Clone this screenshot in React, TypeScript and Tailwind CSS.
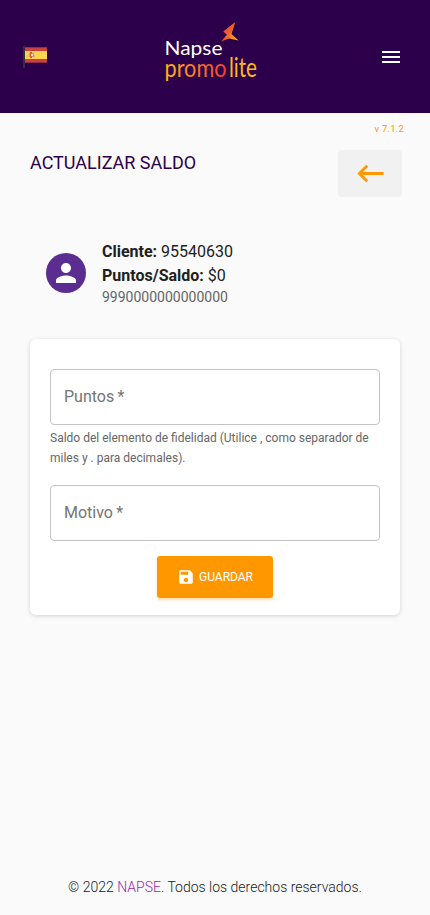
import { MdKeyboardBackspace, MdMenu, MdPerson, MdSave } from 'react-icons/md';

export default function App() {
  return (
    <div className="flex h-[915px] flex-col bg-[#fafafa] font-[Roboto,sans-serif] text-[#212121]">
      <Header />

      <main className="flex flex-1 flex-col px-[30px]">
        <p className="-mr-1 mt-[9px] text-right text-[9.5px] leading-[14px] tracking-[0.2px] text-[#ff9800]">v 7.1.2</p>

        <div className="mt-[14px] flex items-start justify-between">
          <h1 className="text-[18px] leading-[26px] text-[#2d004b]">ACTUALIZAR SALDO</h1>
          <button className="-mr-[2px] flex h-[47px] w-16 items-center justify-center rounded bg-[#f1f1f1] text-[#ff9800]">
            <MdKeyboardBackspace size={35} />
          </button>
        </div>

        <ClientInfo client="95540630" balance="$0" card="9990000000000000" />

        <form className="mt-[33px] flex h-[276px] flex-col rounded-md bg-white px-5 pt-[30px] shadow-[0_1px_4px_rgba(0,0,0,0.16)]">
          <Field label="Puntos" />
          <p className="mt-[3px] text-[12px] leading-5 text-[#666]">
            Saldo del elemento de fidelidad (Utilice , como separador de miles y . para decimales).
          </p>
          <div className="mt-[17px]">
            <Field label="Motivo" />
          </div>
          <button
            type="button"
            className="mx-auto mt-[15px] flex h-[42px] w-[116px] items-center justify-center gap-1 rounded-[3px] bg-[#ff9800] text-[12px] text-white shadow-[0_2px_3px_rgba(255,152,0,0.3)]"
          >
            <MdSave size={18} />
            GUARDAR
          </button>
        </form>
      </main>

      <footer className="pb-[18px] text-center text-[14px] font-light leading-5 text-[#212121]">
        © 2022 <a className="text-[#9c27b0]">NAPSE</a>. Todos los derechos reservados.
      </footer>
    </div>
  );
}

function Header() {
  return (
    <header className="flex h-[113px] shrink-0 items-center justify-between bg-[#2d004b] pl-[23px] pr-[27px] text-white">
      <SpainFlag />
      <Logo />
      <button>
        <MdMenu size={24} />
      </button>
    </header>
  );
}

function SpainFlag() {
  return (
    <svg width="24" height="22" viewBox="0 0 24 22">
      <rect width="2" height="22" fill="#303038" />
      <rect x="2" y="1" width="22" height="16" fill="#c8403f" />
      <rect x="2" y="1" width="22" height="1" fill="#972c48" />
      <rect x="2" y="16" width="22" height="1" fill="#972c48" />
      <rect x="2" y="5" width="22" height="8" fill="#ffd34f" />
      <path d="M4 6h1v1H4zM4 9h1v3H4zM11 6h1v1h-1zM11 9h1v3h-1z" fill="#e8b07a" />
      <path d="M6 7h5v4H6z" fill="#e0905a" />
      <path d="M7 6h2v6H7z" fill="#d2604a" />
      <path d="M8 8h2v2H8z" fill="#f4dce0" />
    </svg>
  );
}

function Logo() {
  return (
    <svg width="98" height="73" viewBox="164 20 98 73" className="overflow-visible">
      <defs>
        <linearGradient id="promo" x1="0" x2="1">
          <stop offset="0" stopColor="#fdb913" />
          <stop offset="1" stopColor="#ee4136" />
        </linearGradient>
        <linearGradient id="bird" x1="0" x2="1">
          <stop offset="0" stopColor="#e8382f" />
          <stop offset="1" stopColor="#fdb913" />
        </linearGradient>
      </defs>
      <path d="M235 22.500 223.500 31.500 227 34.500 221 41.500 229 38.500 238.500 40.500 231.500 34Z" fill="url(#bird)" />
      <path d="M235 22.500 223.500 31.500 227 34.500 231 33Z" fill="#f05a2a" />
      <text x="164.500" y="55" fontFamily="Lato" fontSize="20" fill="#fff" textLength="58" lengthAdjust="spacingAndGlyphs">
        Napse
      </text>
      <text x="164.500" y="77" fontFamily="Lato" fontSize="25" fill="url(#promo)" textLength="62" lengthAdjust="spacingAndGlyphs">
        promo
      </text>
      <text x="229" y="77" fontFamily="Lato" fontSize="27" fill="#fdb913" textLength="28" lengthAdjust="spacingAndGlyphs">
        lite
      </text>
    </svg>
  );
}

function ClientInfo({ client, balance, card }: { client: string; balance: string; card: string }) {
  return (
    <div className="mt-[43px] flex items-center gap-4 pl-4">
      <div className="flex size-10 items-center justify-center rounded-full bg-[#5c2d91] text-white">
        <MdPerson size={30} />
      </div>
      <div className="text-base leading-6">
        <p><b>Cliente:</b> {client}</p>
        <p><b>Puntos/Saldo:</b> {balance}</p>
        <p className="text-[14px] leading-[18px] text-[#666]">{card}</p>
      </div>
    </div>
  );
}

function Field({ label }: { label: string }) {
  return (
    <div className="flex h-14 items-center rounded border border-[#c4c4c4] px-[13px] text-base text-[#757575]">
      {label}&thinsp;*
    </div>
  );
}
